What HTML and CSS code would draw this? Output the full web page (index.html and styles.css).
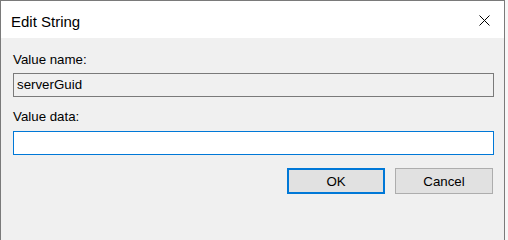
FILE: index.html
```html
<!DOCTYPE html>
<html>
<head>
<meta charset="utf-8">
<link rel="stylesheet" href="styles.css">
</head>
<body>
<div class="window">
  <div class="titlebar">
    <span class="title">Edit String</span>
    <svg class="close" width="11" height="11" viewBox="0 0 11 11"><path d="M0.5 0.5 L10.5 10.5 M10.5 0.5 L0.5 10.5" stroke="#000" stroke-width="1" fill="none"/></svg>
  </div>
  <div class="content">
    <div class="label first">Value name:</div>
    <div class="field readonly">serverGuid</div>
    <div class="label second">Value data:</div>
    <div class="field active"></div>
    <div class="buttons">
      <div class="btn default">OK</div>
      <div class="btn">Cancel</div>
    </div>
  </div>
</div>
</body>
</html>
```
FILE: styles.css
```css
html, body {
  margin: 0;
  padding: 0;
  background: #f7f7f7;
  overflow: hidden;
}
body {
  width: 508px;
  font-family: "Liberation Sans", Arial, sans-serif;
  color: #000;
}
.window {
  box-sizing: border-box;
  width: 505px;
  min-height: 100vh;
  border: 1px solid #7a7a7a;
  border-bottom: none;
  background: #f0f0f0;
  display: flex;
  flex-direction: column;
}
.titlebar {
  height: 37px;
  background: #fff;
  display: flex;
  justify-content: space-between;
  align-items: flex-start;
  flex-shrink: 0;
}
.title {
  font-size: 15px;
  line-height: 17px;
  margin-top: 12px;
  margin-left: 10px;
}
.close {
  margin-top: 14px;
  margin-right: 14px;
}
.content {
  display: flex;
  flex-direction: column;
  padding: 0 10px 0 12px;
}
.label {
  font-size: 13.3px;
  line-height: 16px;
}
.label.first { margin-top: 14px; margin-bottom: 5px; }
.label.second { margin-top: 12px; margin-bottom: 6px; }
.field {
  box-sizing: border-box;
  height: 24px;
  font-size: 13.3px;
  line-height: 22px;
  padding-left: 3px;
}
.field.readonly {
  border: 1px solid #7a7a7a;
  background: #f0f0f0;
}
.field.active {
  border: 1px solid #0078d7;
  background: #fff;
}
.buttons {
  display: flex;
  justify-content: flex-end;
  gap: 10px;
  margin-top: 13px;
  margin-right: 1px;
}
.btn {
  box-sizing: border-box;
  width: 98px;
  height: 26px;
  background: #e1e1e1;
  border: 1px solid #adadad;
  font-size: 13.3px;
  display: flex;
  align-items: center;
  justify-content: center;
}
.btn.default {
  border: 2px solid #0078d7;
}
```
